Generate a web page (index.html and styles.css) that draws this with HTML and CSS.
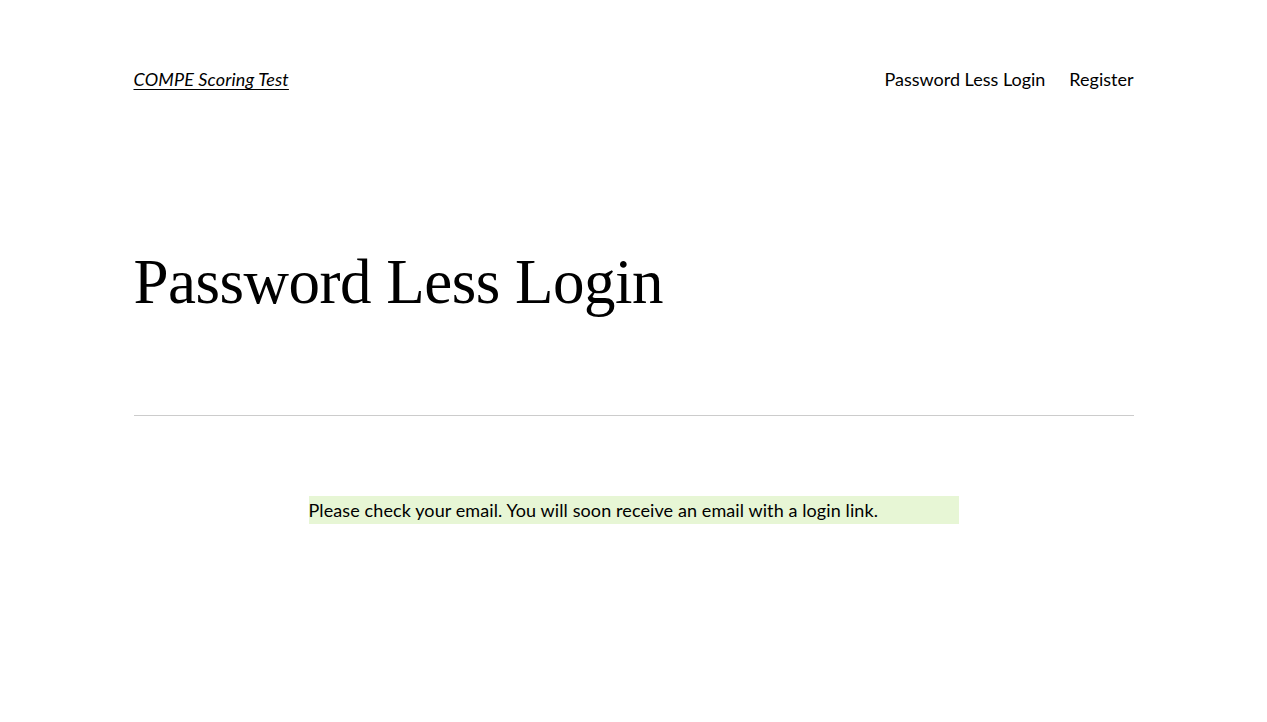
FILE: index.html
```html
<!DOCTYPE html>
<html lang="en">
<head>
<meta charset="utf-8">
<title>Password Less Login – COMPE Scoring Test</title>
<link rel="stylesheet" href="styles.css">
</head>
<body>
<header class="site-header">
  <a class="site-title" href="#">COMPE Scoring Test</a>
  <nav class="site-nav">
    <a href="#">Password Less Login</a>
    <a href="#">Register</a>
  </nav>
</header>
<main class="site-main">
  <h1 class="page-title">Password Less Login</h1>
  <hr class="separator">
  <div class="content">
    <p class="notice">Please check your email. You will soon receive an email with a login link.</p>
  </div>
</main>
</body>
</html>
```
FILE: styles.css
```css
html, body {
  margin: 0;
  padding: 0;
  background: #ffffff;
  color: #000000;
  font-family: "Lato", "Noto Sans", sans-serif;
  font-size: 18px;
}

a {
  color: #000000;
}

.site-header {
  width: 1000px;
  margin: 0 auto;
  padding-top: 64px;
  display: flex;
  justify-content: space-between;
  align-items: center;
  line-height: 30px;
}

.site-title {
  font-style: italic;
  text-decoration: underline;
  text-underline-offset: 3px;
  letter-spacing: 0.15px;
}

.site-nav {
  display: flex;
  gap: 24px;
}

.site-nav a {
  text-decoration: none;
}

.site-main {
  width: 1000px;
  margin: 0 auto;
}

.page-title {
  margin: 144px 0 0;
  font-family: "Liberation Serif", "DejaVu Serif", serif;
  font-weight: 400;
  font-size: 63px;
  line-height: 89px;
  letter-spacing: -0.5px;
}

.separator {
  margin: 88px 0 0;
  border: 0;
  border-top: 1px solid #cccccc;
  height: 0;
}

.content {
  padding-top: 80px;
  display: flex;
  justify-content: center;
}

.notice {
  margin: 0;
  width: 650px;
  background: #e7f6d5;
  line-height: 28px;
  letter-spacing: 0.1px;
}
```
